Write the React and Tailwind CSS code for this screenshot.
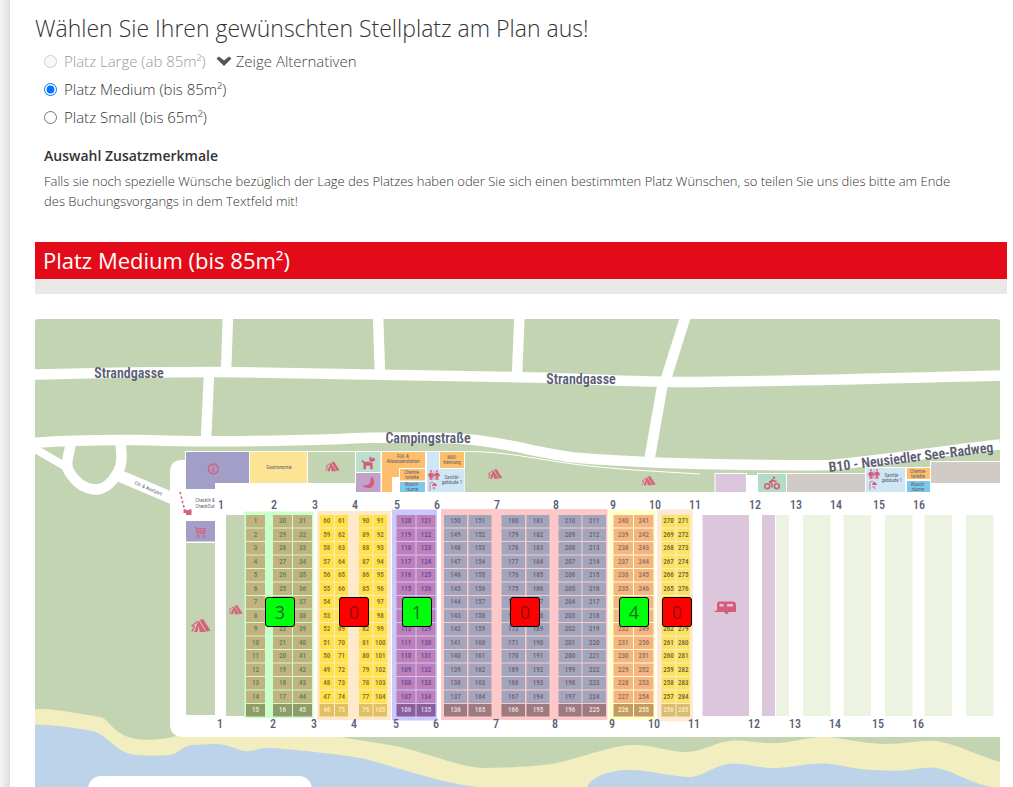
import { useState } from "react";
import { FaDog, FaBiking } from "react-icons/fa";
import { FaPerson, FaPersonDress } from "react-icons/fa6";
import { BsCart4 } from "react-icons/bs";

const ROWS = 15;
const ROW_TOP = 515;
const ROW_STEP = 13.5;

// every group is one bookable area, a column counts up (1) or down (-1) from "start"
// "covered" columns have no numbers in the rows that lie under the availability button
const groups = [
  {
    area: { x: 244.5, y: 511.5, w: 69, h: 206.5, fill: "#c9ffc8" },
    cell: "#c2b280", last: "#8f9b68", text: "#4f8558", lastText: "#e0f0d0",
    cols: [
      { x: 246, w: 19, start: 1, dir: 1 },
      { x: 273, w: 19, start: 30, dir: -1, covered: true },
      { x: 293, w: 19, start: 31, dir: 1 },
    ],
  },
  {
    area: { x: 317, y: 511, w: 74, h: 209, fill: "#ffe9cb" },
    cell: "#ffe24a", last: "#e0c060", text: "#7d6a34", lastText: "#fbeec0",
    cols: [
      { x: 319.5, w: 14.5, start: 60, dir: -1 },
      { x: 335, w: 13, start: 61, dir: 1, covered: true },
      { x: 359, w: 13.5, start: 90, dir: -1, covered: true },
      { x: 373.5, w: 13.5, start: 91, dir: 1 },
    ],
  },
  {
    area: { x: 392, y: 509.5, w: 45, h: 211, fill: "#c9c8ff" },
    cell: "#bf80b8", last: "#8a5f9c", text: "#5c4a9c", lastText: "#ded0ee",
    cols: [
      { x: 396.5, w: 19, start: 120, dir: -1, covered: true },
      { x: 416.5, w: 19, start: 121, dir: 1, covered: true },
    ],
  },
  {
    area: { x: 441, y: 509, w: 166.5, h: 211, fill: "#ffc8c8" },
    cell: "#a2a6bd", last: "#9c7a80", text: "#765c74", lastText: "#f0dcdc",
    cols: [
      { x: 444, w: 23, start: 150, dir: -1 },
      { x: 468.5, w: 23, start: 151, dir: 1 },
      { x: 501.5, w: 23.5, start: 180, dir: -1 },
      { x: 526.5, w: 23, start: 181, dir: 1 },
      { x: 558.5, w: 23, start: 210, dir: -1 },
      { x: 582.5, w: 23.5, start: 211, dir: 1 },
    ],
  },
  {
    area: { x: 609, y: 510, w: 46, h: 210, fill: "#ffffc6" },
    cell: "#f5b583", last: "#c49a63", text: "#8d7058", lastText: "#fff0c8",
    cols: [
      { x: 613.5, w: 19.5, start: 240, dir: -1, covered: true },
      { x: 634, w: 19.5, start: 241, dir: 1, covered: true },
    ],
  },
  {
    area: { x: 657, y: 509.5, w: 36, h: 212, fill: "#fde9d6" },
    cell: "#fae35e", last: "#d8bd6c", text: "#6f5f3c", lastText: "#f8eccb",
    cols: [
      { x: 661.5, w: 14, start: 270, dir: -1, covered: true },
      { x: 676.5, w: 13.5, start: 271, dir: 1, covered: true },
    ],
  },
];

const topMarks = [221, 274, 315, 355, 397, 437, 497, 556, 613, 655, 695, 755, 796, 836, 879, 919];
const bottomMarks = [220, 273, 314, 354, 396, 436, 496, 555, 612, 654, 694, 754, 795, 835, 878, 918];

const availability = [
  { id: "A", count: 3, pos: "left-[230px]" },
  { id: "B", count: 0, pos: "left-[304px]" },
  { id: "C", count: 1, pos: "left-[367px]" },
  { id: "D", count: 0, pos: "left-[475px]" },
  { id: "E", count: 4, pos: "left-[584px]" },
  { id: "F", count: 0, pos: "left-[627px]" },
];

const Tent = ({ x, y, s = 1 }) => (
  <g transform={`translate(${x} ${y}) scale(${s})`} fill="#d6637c">
    <path d="M8.6 1 L12 0 L19.5 11.5 L15.6 12.8 Z" />
    <path d="M7.6 1.4 L14.9 13 H8.8 L7.6 7 L6.4 13 H3 Z" />
    <path d="M6.6 2.6 L1 6.6 L3.4 7.6 L0.8 12.6" fill="none" stroke="#d6637c" strokeWidth="1.2" />
  </g>
);

const Washroom = ({ x, y }) => (
  <g transform={`translate(${x} ${y})`}>
    <FaPersonDress x="-2" y="0" size="10" />
    <FaPerson x="4" y="0" size="10" />
    <path d="M6 0.5 V10" stroke="currentColor" strokeWidth="0.6" />
    <path d="M2 21 V14 Q2 12 4.5 12.2 L6 13.5" fill="none" stroke="currentColor" strokeWidth="0.8" />
    <path d="M4 16 Q4.5 13.2 6.5 13 Q8.7 13.5 9 16 Z" fill="currentColor" />
    <path d="M5 17 v2 M6.7 17 v3" stroke="currentColor" strokeWidth="0.8" />
  </g>
);

const Label = ({ x, y, children }) => (
  <text x={x} y={y} textAnchor="middle" className="text-[5px] font-normal fill-[#625d72]">{children}</text>
);

const Plots = ({ area, cell, last, text, lastText, cols }) => (
  <g>
    <rect x={area.x} y={area.y} width={area.w} height={area.h} fill={area.fill} />
    {cols.map((col) =>
      Array.from({ length: ROWS }, (_, i) => {
        const isLast = i === ROWS - 1;
        const y = ROW_TOP + i * ROW_STEP;
        const hidden = col.covered && (i === 6 || i === 7);
        return (
          <g key={col.start + "-" + i}>
            <rect x={col.x} y={y} width={col.w} height={12.5} fill={isLast ? last : cell} />
            {!hidden && (
              <text
                x={col.x + col.w / 2}
                y={y + 8}
                textAnchor="middle"
                className="text-[7px] font-medium"
                fill={isLast ? lastText : text}
              >
                {col.start + col.dir * i}
              </text>
            )}
          </g>
        );
      })
    )}
  </g>
);

const CampMap = () => (
  <svg
    viewBox="35 319 965 468"
    className="block w-full rounded-t-[3px] font-['Liberation_Sans_Narrow','Roboto_Condensed','Liberation_Sans',sans-serif]"
    role="img"
    aria-label="Lageplan"
  >
    <rect x="35" y="319" width="965" height="468" fill="#c3d4b3" />

    {/* beach and lake */}
    <path fill="#f3eebf" d="M35 709.5 C50 708 60 711 100 717 C108 719 110 727 120 733 C132 741 152 741 168 738 L180 735 H330 C350 739 380 743 400 747 C430 754 460 767 482 768 C510 768 535 766 552 764 C585 757 612 745 633 745 C655 745 668 752 687 752 C705 751 715 742 733 740.5 C750 740 762 744 777 743 C795 742 805 737 825 737 C845 738 865 744 885 744 C905 744 920 740 937 741 C955 744 975 754 1000 762 V787 H35 Z" />
    <path fill="#bdd3e9" d="M35 724.5 C55 725 75 728 93 731 C108 736 115 750 130 754 C140 756 158 756 170 755 C180 753 182 746 192 745 C205 745 215 743 225 745 C235 747 240 752 250 751 C258 750 262 747 272 748 C310 751 345 755 365 759 C400 768 440 783 477 787 H35 Z" />
    <path fill="#bdd3e9" d="M587 787 C592 775 615 769 633 770 C655 771 672 777 692 777 C708 774 715 764 735 763.5 C750 764 762 769 777 768 C795 767 805 763 825 763.5 C842 764 850 770 885 770.5 C905 772 915 768 930 767.5 C952 768 962 781 992 787 Z" />

    {/* roads */}
    <g fill="none" stroke="#fff" strokeWidth="10.5">
      <path d="M35 374.5 C90 373 150 372 220 372 C320 373 420 376 510 377 C580 378 620 382 700 382 C800 381 900 378 1000 375.5" />
      <path d="M30 443 C70 440 100 439.5 140 440 C200 442 280 441 340 439 C380 437 440 437 470 439.5 C510 443 545 455 580 458 C640 463 740 466 830 465 C880 461 940 451 1000 444.5" />
      <path d="M228 315 L226 372" />
      <path d="M209 374 L206 440" />
      <path d="M378 315 L380 374" />
      <path d="M519.5 315 L517 376" />
      <path d="M686 315 L665 382" />
      <path d="M663 382 L649 462" />
      <path d="M71 443 C69 455 64 465 70 473 C77 484 87 489.5 97 489.5 C107 489 114 479 118 472 C123 463 121.5 455 120.5 442" />
      <path d="M30 446 L68 468" strokeWidth="8" />
      <path d="M120 476 L174 499" strokeWidth="12" />
    </g>
    <path d="M465 451.5 C505 451 540 460 573 464 C610 469 650 471 700 474" fill="none" stroke="#fff" strokeWidth="1" />

    {/* camp ground */}
    <path fill="#fff" d="M170 472 Q170 460 182 460 H185 V451 H465 V492 H714.5 V473 H747 V475 H757 V473 H865 V467 H930 V461 H1000 V737 H184 Q170 737 170 724 Z" />
    <path fill="#a19fc8" d="M186 452 H249 V483 H215 V489 H186 Z" />
    <rect x="250" y="452" width="57" height="31" fill="#fde394" />
    <rect x="308" y="452" width="47" height="31" fill="#c3d4b3" />
    <rect x="356" y="452" width="24.5" height="20" fill="#bcdfcb" />
    <rect x="356" y="473" width="24.5" height="19" fill="#bfa3ca" />
    <path fill="#fdbf6b" d="M382 452 H425 V468 H399 V477 H392 V492 H382 Z" />
    <rect x="400" y="469" width="25" height="11.5" fill="#fdbf6b" />
    <rect x="400" y="482" width="25" height="10" fill="#7cc9ea" />
    <rect x="427" y="452" width="37.5" height="40" fill="#cfe7f5" />
    <rect x="439.5" y="451.5" width="25" height="17" fill="#fdbf6b" stroke="#fff" />
    <rect x="715.5" y="474" width="30.5" height="18" fill="#dbc6dc" />
    <rect x="758" y="474" width="28" height="18" fill="#b2dcc8" />
    <rect x="787" y="474" width="78" height="18" fill="#d1cbc8" />
    <rect x="866" y="468" width="39" height="24" fill="#cfe7f5" />
    <rect x="907" y="468" width="23" height="11" fill="#fdbf6b" />
    <rect x="907" y="481" width="23" height="11" fill="#7cc9ea" />
    <rect x="931" y="462" width="69" height="21" fill="#d1cbc8" />
    <rect x="186" y="521" width="29" height="20.5" fill="#a19fc8" />
    <rect x="186" y="543" width="29" height="172" fill="#c3d4b3" />
    <rect x="226" y="515" width="20" height="201" fill="#c3d4b3" />
    <g fill="#dbc6dc">
      <rect x="702.5" y="515" width="46.5" height="201" />
      <rect x="762" y="515" width="13" height="201" />
    </g>
    <g fill="#ecf3e0">
      <rect x="776" y="515" width="13" height="201" />
      <rect x="803" y="515" width="27.5" height="201" />
      <rect x="843.5" y="515" width="27.5" height="201" />
      <rect x="885" y="515" width="27.5" height="201" />
      <rect x="924.5" y="515" width="27.5" height="201" />
      <rect x="966" y="515" width="27.5" height="201" />
    </g>
    <rect x="88" y="776" width="224" height="40" rx="13" fill="#fff" />

    {groups.map((g) => (
      <Plots key={g.area.x} {...g} />
    ))}

    {/* barrier */}
    <path d="M180 492 L185 511" stroke="#d6637c" strokeWidth="1.5" strokeDasharray="2.5 2" fill="none" />
    <path d="M183.5 509.5 h3 v1 l5 -1.5 v6 h-5.5 v-2 h-2.5 Z" fill="#d6637c" />

    {/* symbols */}
    <g className="text-[#d65c78]">
      <circle cx="213.3" cy="469" r="5" fill="none" stroke="currentColor" strokeWidth="1.3" />
      <path d="M213.3 465.8 v1.4 M213.3 468.2 v4" fill="none" stroke="currentColor" strokeWidth="1.5" />
      <BsCart4 x="194" y="525" size="13" />
      <FaDog x="361" y="455" size="15" />
      <Washroom x="428" y="470" />
      <Washroom x="868" y="469" />
      <FaBiking x="764" y="475" size="16" />
      {/* caravan */}
      <path
        fillRule="evenodd"
        fill="currentColor"
        d="M719 601.5 H733 Q736 601.5 736 605 V612 H728.5 A2 2 0 0 1 724.5 612 H714.5 V611 L717 610.5 V604 Q717 601.5 719 601.5 Z M719.5 604 V606.5 H723.5 V604 Z M727 604 V606.5 H733 V604 Z"
      />
    </g>
    <path d="M371.5 476.5 C376 481 374.5 488 368.5 488 C365 488 363 487 362.3 485.3 C367 486 370.5 484 370.5 481 C370.5 479.5 370.5 478 371.5 476.5 Z" fill="#d65c78" />
    <Tent x={325} y={461.5} s={0.75} />
    <Tent x={487.5} y={469} s={0.75} />
    <Tent x={641.5} y={476} s={0.72} />
    <Tent x={228.5} y={605} s={0.72} />
    <Tent x={191} y={619} />

    {/* building labels */}
    <Label x={279} y={469}>Gastronomie</Label>
    <Label x={403} y={458}>Füll- &amp;</Label>
    <Label x={403} y={463}>Abwasserstation</Label>
    <Label x={412} y={474}>Chemie-</Label>
    <Label x={412} y={479}>toilette</Label>
    <Label x={412} y={486}>Wasch-</Label>
    <Label x={412} y={491}>räume</Label>
    <Label x={452} y={459}>Müll-</Label>
    <Label x={452} y={464}>trennung</Label>
    <Label x={452} y={479}>Sanitär-</Label>
    <Label x={452} y={484}>gebäude 1</Label>
    <Label x={892} y={477}>Sanitär-</Label>
    <Label x={892} y={482}>gebäude 1</Label>
    <Label x={918} y={473}>Chemie-</Label>
    <Label x={918} y={478}>toilette</Label>
    <Label x={918} y={486}>Wasch-</Label>
    <Label x={918} y={491}>räume</Label>
    <Label x={205} y={502}>CheckIn &amp;</Label>
    <Label x={205} y={508}>CheckOut</Label>
    <g transform="rotate(24 148 489)">
      <Label x={148} y={490}>Ein- &amp; Ausfahrt</Label>
    </g>

    {/* street names and row numbers */}
    <g textAnchor="middle" fill="#5a5d73">
      <g className="text-[14px] font-semibold">
        <text x="129" y="378">Strandgasse</text>
        <text x="581" y="384">Strandgasse</text>
        <text x="428" y="443">Campingstraße</text>
        <text x="911" y="462" transform="rotate(-7 911 458)">B10 - Neusiedler See-Radweg</text>
      </g>
      <g className="text-[12px] font-medium">
        {topMarks.map((x, i) => (
          <text key={x} x={x} y="509">{i + 1}</text>
        ))}
        {bottomMarks.map((x, i) => (
          <text key={x} x={x} y="728">{i + 1}</text>
        ))}
      </g>
    </g>
  </svg>
);

const App = () => {
  const [size, setSize] = useState("medium");

  return (
    <div className="min-h-screen bg-gradient-to-r from-[#f6f6f6] from-0% to-[#dedede] to-[10px] pl-[10px] font-['Open_Sans',sans-serif] text-[#333]">
      <main className="bg-white pl-[25px] pr-[6px] pt-3">
        <h1 className="text-[23px] font-light leading-8">Wählen Sie Ihren gewünschten Stellplatz am Plan aus!</h1>

        <fieldset className="flex flex-col pt-[3px] pl-2 text-[15px] font-light leading-7">
          <div className="flex items-center">
            <input type="radio" id="large" name="size" disabled className="m-0 ml-px size-[13px]" />
            <label htmlFor="large" className="pl-[7px] text-[#999]">Platz Large (ab 85m²)</label>
            <button type="button" className="flex items-center gap-1 pl-[10px] text-[#444]">
              <svg viewBox="0 0 16 10" className="h-[10px] w-4" fill="#555">
                <path d="M0.5 2.5 L3 0.5 L8 4.5 L13 0.5 L15.5 2.5 L8 10 Z" />
              </svg>
              Zeige Alternativen
            </button>
          </div>
          <div className="flex items-center">
            <input
              type="radio"
              id="medium"
              name="size"
              checked={size === "medium"}
              onChange={() => setSize("medium")}
              className="m-0 ml-px size-[13px]"
            />
            <label htmlFor="medium" className="pl-[7px]">Platz Medium (bis 85m²)</label>
          </div>
          <div className="flex items-center">
            <input
              type="radio"
              id="small"
              name="size"
              checked={size === "small"}
              onChange={() => setSize("small")}
              className="m-0 ml-px size-[13px]"
            />
            <label htmlFor="small" className="pl-[7px]">Platz Small (bis 65m²)</label>
          </div>
        </fieldset>

        <section className="pl-[9px] pr-12 pt-[11px]">
          <h2 className="pb-px text-[14px] font-semibold leading-7">Auswahl Zusatzmerkmale</h2>
          <p className="text-[13px] font-light leading-5">
            Falls sie noch spezielle Wünsche bezüglich der Lage des Platzes haben oder Sie sich einen bestimmten Platz Wünschen, so teilen Sie uns dies bitte am Ende des Buchungsvorgangs in dem Textfeld mit!
          </p>
        </section>

        <h2 className="mt-[31px] bg-[#e30b19] px-2 pb-px text-[22px] leading-9 text-white">
          Platz Medium (bis 85m²)
        </h2>
        <div className="h-[15px] bg-[#e9e8e7]" />

        <div className="relative mt-[25px] mr-[7px]">
          <CampMap />
          {availability.map((a) => (
            <button
              key={a.id}
              type="button"
              className={`absolute top-[278px] flex size-[30px] items-center justify-center rounded-[3px] border border-black text-lg ${a.pos} ${
                a.count > 0 ? "bg-[#00ff0c] text-[#1f6b1f]" : "bg-[#ff0000] text-[#8a1010]"
              }`}
            >
              {a.count}
            </button>
          ))}
        </div>
      </main>
    </div>
  );
};

export default App;
